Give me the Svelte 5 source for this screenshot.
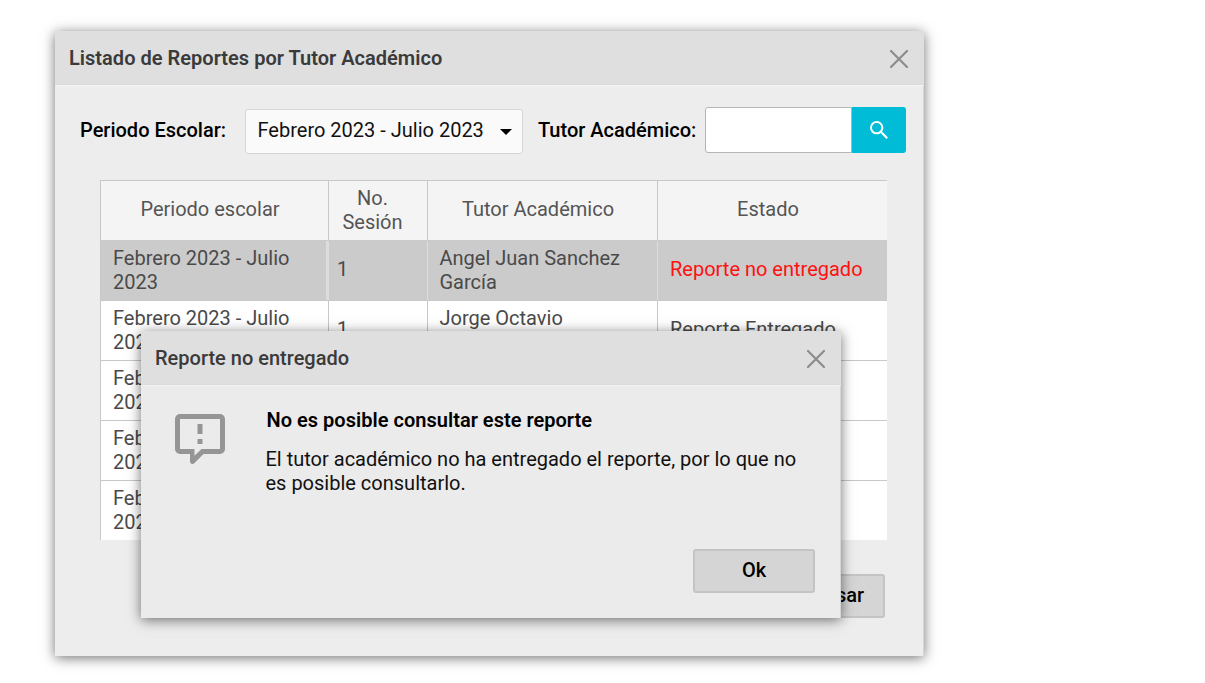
<script>
  const period = 'Febrero 2023 - Julio 2023';
  const rows = [
    { session: '1', tutor: 'Angel Juan Sanchez García', status: 'Reporte no entregado', missing: true },
    { session: '1', tutor: 'Jorge Octavio', status: 'Reporte Entregado' },
    { session: '', tutor: '', status: '' },
    { session: '', tutor: '', status: '' },
    { session: '', tutor: '', status: '' }
  ];
</script>

{#snippet closeIcon()}
  <svg class="close" viewBox="0 0 18 18"><path d="M1 1L17 17M17 1L1 17" /></svg>
{/snippet}

<main class="desktop">
  <section class="window">
    <header>
      <h1>Listado de Reportes por Tutor Académico</h1>
      {@render closeIcon()}
    </header>
    <div class="filters">
      <span class="label period-label">Periodo Escolar:</span>
      <div class="select">
        <span>{period}</span>
        <svg viewBox="0 0 12 6"><path d="M0 0H12L6 6Z" /></svg>
      </div>
      <span class="label tutor-label">Tutor Académico:</span>
      <div class="search">
        <input aria-label="Tutor Académico" />
        <button aria-label="Buscar">
          <svg viewBox="3 3 17.5 17.5"><path d="M15.5 14h-.79l-.28-.27A6.47 6.47 0 0 0 16 9.5 6.5 6.5 0 1 0 9.5 16c1.61 0 3.09-.59 4.23-1.57l.27.28v.79l5 4.99L20.49 19l-4.99-5zm-6 0C7.01 14 5 11.99 5 9.5S7.01 5 9.5 5 14 7.01 14 9.5 11.99 14 9.5 14z" /></svg>
        </button>
      </div>
    </div>
    <div class="table">
      <div class="row head">
        <div>Periodo escolar</div>
        <div class="two-line">No.<br />Sesión</div>
        <div>Tutor Académico</div>
        <div>Estado</div>
      </div>
      {#each rows as row, i}
        <div class="row" class:selected={i === 0}>
          <div>{period}</div>
          <div>{row.session}</div>
          <div class="tutor">{row.tutor}</div>
          <div class:missing={row.missing}>{row.status}</div>
        </div>
      {/each}
    </div>
    <footer>
      <button class="btn primary" aria-label="Consultar"></button>
      <button class="btn">Regresar</button>
    </footer>
  </section>

  <section class="window dialog">
    <header>
      <h2>Reporte no entregado</h2>
      {@render closeIcon()}
    </header>
    <div class="message">
      <svg class="feedback" viewBox="2 2 20 20"><path d="M20 2H4a2 2 0 0 0-2 2v12a2 2 0 0 0 2 2h4v3a1 1 0 0 0 1.700.7L13.400 18H20a2 2 0 0 0 2-2V4a2 2 0 0 0-2-2zM20 16H12.600L9.800 18.700V16H4V4H20z" fill-rule="evenodd" /><path d="M11 6h2v4h-2zM11 12h2v2h-2z" /></svg>
      <div>
        <h3>No es posible consultar este reporte</h3>
        <p>El tutor académico no ha entregado el reporte, por lo que no es posible consultarlo.</p>
      </div>
    </div>
    <footer><button class="btn">Ok</button></footer>
  </section>
</main>

<style>
  :global(body) { margin: 0; background: #fff; }
  .desktop {
    position: relative;
    width: 1205px;
    height: 683px;
    overflow: hidden;
    font: 20px/24px Roboto, sans-serif;
    color: #000;
  }
  .desktop * { box-sizing: border-box; }
  .window {
    position: absolute;
    left: 55px;
    top: 31px;
    width: 869px;
    height: 625px;
    display: flex;
    flex-direction: column;
    background: #ededed;
    border-right: 1px solid #d6d6d6;
    box-shadow: 0 2px 12px rgba(0, 0, 0, 0.55);
  }
  header {
    flex: none;
    height: 54px;
    display: flex;
    align-items: center;
    justify-content: space-between;
    padding: 0 16px 0 14px;
    margin-right: -1px;
    background: #dfdfdf;
    border-bottom: 1px solid #dadada;
    box-shadow: 0 1px #f4f4f4;
  }
  h1, h2, h3, p { margin: 0; }
  h1, h2 { font-size: 20px; line-height: 24px; color: #3a3a3a; }
  h1 { font-weight: 600; letter-spacing: 0.02px; }
  h2 { font-weight: 500; }
  .close { width: 18px; height: 18px; margin-top: 2px; fill: none; stroke: #8c8c8c; stroke-width: 2.2; stroke-linecap: round; }
  .filters { display: flex; align-items: center; height: 46px; margin: 22px 0 0 25px; }
  .label { font-weight: 500; white-space: nowrap; }
  .period-label { width: 165px; }
  .tutor-label { width: 167px; margin-left: 15px; }
  .select {
    width: 278px;
    height: 45px;
    margin-top: 3px;
    padding: 0 10px 3px 11.5px;
    display: flex;
    align-items: center;
    justify-content: space-between;
    background: #fafafa;
    border: 1px solid #d6d6d6;
    border-radius: 3px;
    white-space: nowrap;
    color: #111;
  }
  .select svg { width: 12px; height: 6px; margin-top: 3px; fill: #000; }
  .search { display: flex; width: 201px; height: 46px; }
  input {
    width: 147px;
    border: 1px solid #b5b5b5;
    border-radius: 3px 0 0 3px;
    padding: 0 8px;
    background: #fff;
    font: inherit;
  }
  .search button {
    flex: 1;
    border: 0;
    border-radius: 0 3px 3px 0;
    background: #00bcd7;
    padding: 0;
    display: flex;
    align-items: center;
    justify-content: center;
  }
  .search svg { width: 18px; height: 18px; margin-bottom: 1px; fill: #fff; }
  .table { width: 787px; margin: 27px 0 0 45px; color: #4a4a4a; }
  .row {
    display: grid;
    grid-template-columns: 228px 99px 230px 230px;
    height: 60px;
    background: #fff;
    border-top: 1px solid #c8c8c8;
  }
  .row > div { display: flex; align-items: center; padding: 0 0 3px 12px; border-left: 1px solid #c8c8c8; }
  .row > div:first-child { padding-bottom: 1px; padding-right: 30px; }
  .row > div:nth-child(2) { padding-left: 8px; }
  .row.head { background: #f4f4f4; color: #555; }
  .row.head > div { justify-content: center; text-align: center; padding: 0 9px 3px 0; }
  .row.head > .two-line { padding: 0 11px 1px 0; }
  .row.selected { background: #cbcbcb; border-top-color: #cbcbcb; }
  .row.selected > div + div { border-color: #ddd; }
  .row.selected > div:first-child { border-right: 2px solid #dcdcdc; }
  .row > .tutor { align-items: flex-start; padding-top: 5px; padding-left: 11.5px; }
  .row > .missing { color: #f11; }
  footer { display: flex; justify-content: flex-end; margin: auto 38px 38px 0; gap: 29px; }
  .btn {
    width: 122px;
    height: 44px;
    padding: 0 0 2px;
    border: 2px solid #c4c4c4;
    border-radius: 3px;
    background: #d5d5d5;
    font: 500 20px/24px Roboto, sans-serif;
    color: #000;
  }
  .btn.primary { background: #00bcd7; border-color: #a9c1c7; }
  .dialog { left: 141px; top: 331px; width: 700px; height: 287px; background: #ebebeb; }
  .message { display: flex; padding: 28px 0 0 33px; }
  .feedback { width: 50px; height: 50px; margin: 0.5px 0.5px 0 0.5px; fill: #959595; flex: none; }
  .message > div { margin: -5px 0 0 40.5px; width: 540px; }
  h3 { font-size: 20px; line-height: 24px; font-weight: 600; padding-left: 1px; letter-spacing: 0.02px; }
  p { margin-top: 15px; color: #111; }
  .dialog footer { margin: auto 25px 25px 0; }
</style>
